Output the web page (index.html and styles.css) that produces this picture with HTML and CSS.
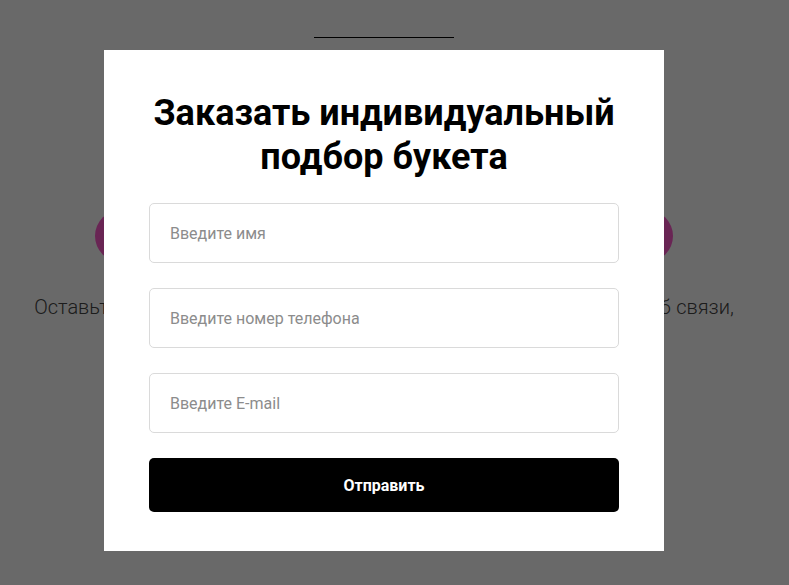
FILE: index.html
```html
<!DOCTYPE html>
<html lang="ru">
<head>
    <meta charset="UTF-8">
    <meta name="viewport" content="width=device-width, initial-scale=1.0">
    <title>Индивидуальный подбор букета</title>
    <link rel="stylesheet" href="styles.css">
</head>
<body>

    <div class="page">
        <div class="title-line"></div>
        <button class="order-btn" type="button">Заказать подбор</button>
        <p class="lead">Оставьте заявку, и мы перезвоним, чтобы уточнить детали и способ связи,</p>
    </div>

    <!-- popup with the order form -->
    <div class="overlay">
        <div class="modal">
            <h2 class="modal-title">Заказать индивидуальный подбор букета</h2>
            <form class="order-form" onsubmit="return false;">
                <input type="text" class="field" placeholder="Введите имя">
                <input type="tel" class="field" placeholder="Введите номер телефона">
                <input type="email" class="field" placeholder="Введите E-mail">
                <button type="submit" class="send-btn">Отправить</button>
            </form>
        </div>
    </div>

</body>
</html>
```

FILE: styles.css
```css
body {
    margin: 0;
    padding: 0;
    font-family: Roboto, "Liberation Sans", Arial, sans-serif;
    background-color: #fff;
    color: #444;
    overflow: hidden;
}

.page {
    width: 768px;
    padding-top: 37px;
    display: flex;
    flex-direction: column;
    align-items: center;
}

.title-line {
    width: 140px;
    height: 1px;
    background-color: #000;
}

.order-btn {
    width: 578px;
    height: 52px;
    margin-top: 172px;
    border: none;
    border-radius: 26px;
    background-color: #ff5acd;
    color: #fff;
    font-family: inherit;
    font-size: 16px;
}

.lead {
    margin: 33px 0 0;
    font-size: 20px;
    font-weight: 300;
    line-height: 24px;
    word-spacing: 0.5px;
    text-align: center;
}

.overlay {
    position: fixed;
    top: 0;
    left: 0;
    right: 0;
    bottom: 0;
    background-color: rgba(0, 0, 0, 0.59);
    padding-top: 50px;
}

.modal {
    width: 560px;
    box-sizing: border-box;
    margin-left: 104px;
    padding: 41px 45px 39px;
    background-color: #fff;
}

.modal-title {
    margin: 0 0 24px;
    font-size: 36px;
    font-weight: 700;
    line-height: 44px;
    text-align: center;
    color: #000;
}

.order-form {
    display: flex;
    flex-direction: column;
    gap: 25px;
}

.field {
    height: 60px;
    box-sizing: border-box;
    padding: 0 20px;
    border: 1px solid #dadada;
    border-radius: 5px;
    font-family: inherit;
    font-size: 16px;
    color: #333;
    outline: none;
}

.field::placeholder {
    color: #8c8c8c;
}

.send-btn {
    height: 54px;
    border: none;
    border-radius: 5px;
    background-color: #000;
    color: #fff;
    font-family: inherit;
    font-size: 16px;
    font-weight: 700;
    cursor: pointer;
}
```
